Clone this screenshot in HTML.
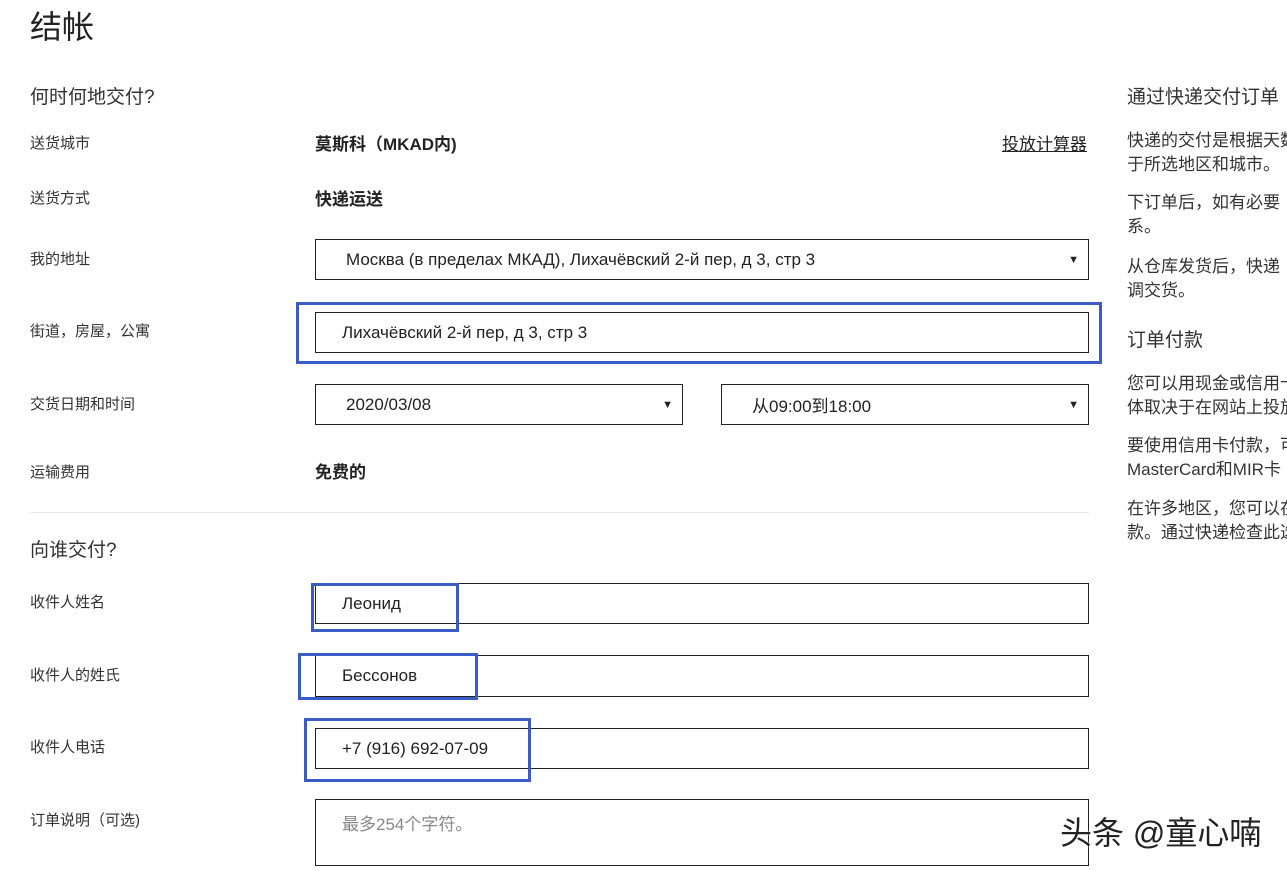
<!DOCTYPE html>
<html><head><meta charset="utf-8"><style>
body{margin:0;width:1287px;height:871px;overflow:hidden;background:#fff;font-family:"Liberation Sans","Noto Sans CJK SC",sans-serif;color:#222;position:relative}
.a{position:absolute;white-space:nowrap}
.l{font-size:15px;color:#333}
.b{font-weight:bold;font-size:17px;color:#222}
.box{position:absolute;border:1px solid #222;background:#fff;box-sizing:border-box;font-size:17px;color:#222;padding-left:30px;display:flex;align-items:center}
.arr{position:absolute;right:9px;font-size:11px;top:50%;transform:translateY(-50%)}
.blue{position:absolute;border:3px solid #3b5bc6;box-sizing:border-box}
.r{font-size:17px;color:#333;line-height:24px}
</style></head><body>
<div class="a" style="left:30px;top:2px;font-size:32px;color:#222">结帐</div>
<div class="a" style="left:30px;top:82px;font-size:19px;color:#333">何时何地交付?</div>
<div class="a l" style="left:30px;top:132px">送货城市</div>
<div class="a b" style="left:315px;top:130px">莫斯科（MKAD内)</div>
<div class="a" style="left:1002px;top:130px;font-size:17px;text-decoration:underline">投放计算器</div>
<div class="a l" style="left:30px;top:187px">送货方式</div>
<div class="a b" style="left:315px;top:185px">快递运送</div>
<div class="a l" style="left:30px;top:248px">我的地址</div>
<div class="box" style="left:315px;top:239px;width:774px;height:41px">Москва (в пределах МКАД), Лихачёвский 2-й пер, д 3, стр 3<span class="arr">▼</span></div>
<div class="a l" style="left:30px;top:320px">街道，房屋，公寓</div>
<div class="box" style="left:315px;top:312px;width:774px;height:41px;padding-left:26px">Лихачёвский 2-й пер, д 3, стр 3</div>
<div class="blue" style="left:296px;top:302px;width:806px;height:62px"></div>
<div class="a l" style="left:30px;top:393px">交货日期和时间</div>
<div class="box" style="left:315px;top:384px;width:368px;height:41px">2020/03/08<span class="arr">▼</span></div>
<div class="box" style="left:721px;top:384px;width:368px;height:41px">从09:00到18:00<span class="arr">▼</span></div>
<div class="a l" style="left:30px;top:461px">运输费用</div>
<div class="a b" style="left:315px;top:458px">免费的</div>
<div class="a" style="left:30px;top:512px;width:1059px;border-top:1px solid #e8e8e8"></div>
<div class="a" style="left:30px;top:535px;font-size:19px;color:#333">向谁交付?</div>
<div class="a l" style="left:30px;top:591px">收件人姓名</div>
<div class="box" style="left:315px;top:583px;width:774px;height:41px;padding-left:26px">Леонид</div>
<div class="blue" style="left:311px;top:583px;width:148px;height:49px"></div>
<div class="a l" style="left:30px;top:664px">收件人的姓氏</div>
<div class="box" style="left:315px;top:655px;width:774px;height:42px;padding-left:26px">Бессонов</div>
<div class="blue" style="left:298px;top:653px;width:180px;height:47px"></div>
<div class="a l" style="left:30px;top:736px">收件人电话</div>
<div class="box" style="left:315px;top:728px;width:774px;height:41px;padding-left:26px">+7 (916) 692-07-09</div>
<div class="blue" style="left:304px;top:718px;width:227px;height:64px"></div>
<div class="a l" style="left:30px;top:809px">订单说明（可选)</div>
<div class="box" style="left:315px;top:799px;width:774px;height:67px;align-items:flex-start;padding-top:10px;padding-left:26px;color:#888">最多254个字符。</div>
<div class="a" style="left:1127px;top:82px;font-size:19px;color:#333">通过快递交付订单</div>
<div class="a r" style="left:1127px;top:129px">快递的交付是根据天数<br>于所选地区和城市。</div>
<div class="a r" style="left:1127px;top:191px">下订单后，如有必要<br>系。</div>
<div class="a r" style="left:1127px;top:255px">从仓库发货后，快递<br>调交货。</div>
<div class="a" style="left:1127px;top:325px;font-size:19px;color:#333">订单付款</div>
<div class="a r" style="left:1127px;top:372px">您可以用现金或信用卡<br>体取决于在网站上投放</div>
<div class="a r" style="left:1127px;top:434px">要使用信用卡付款，可<br>MasterCard和MIR卡</div>
<div class="a r" style="left:1127px;top:497px">在许多地区，您可以在<br>款。通过快递检查此选</div>
<div class="a" style="left:1060px;top:808px;font-size:32px;color:#222;text-shadow:0 0 3px #fff">头条 @童心喃</div>
</body></html>
